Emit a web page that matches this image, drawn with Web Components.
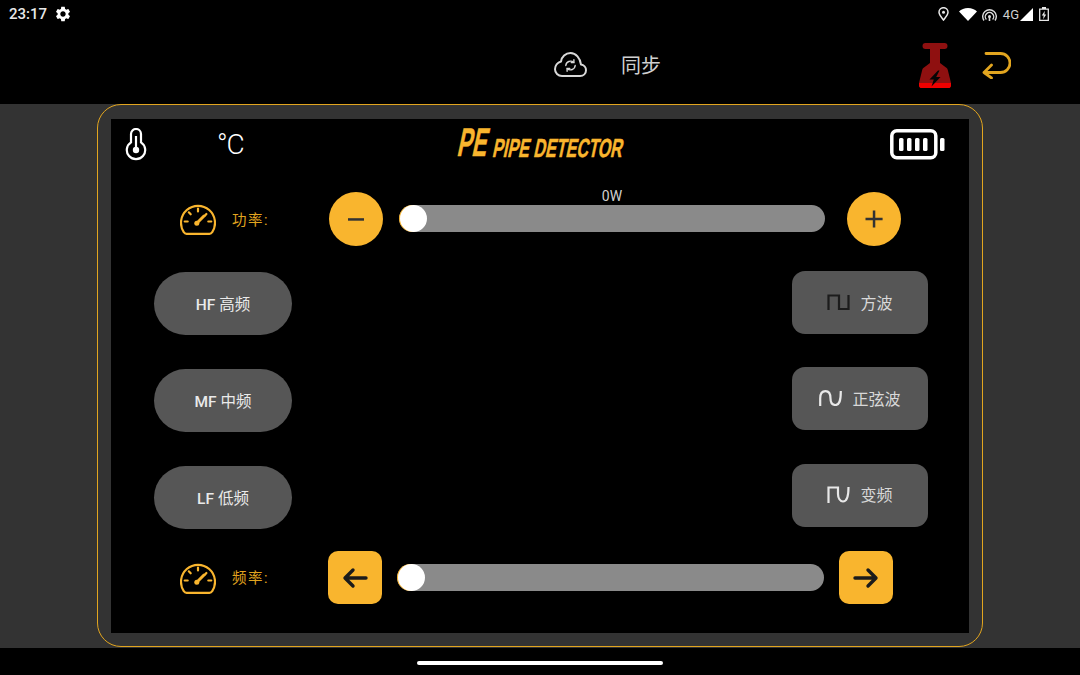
<!DOCTYPE html>
<html lang="zh">
<head>
<meta charset="utf-8">
<title>PE Pipe Detector</title>
<style>
  html, body { margin: 0; height: 100%; background: #000; }
  body { font-family: Roboto, "Noto Sans CJK SC", sans-serif; overflow: hidden; }
</style>
</head>
<body>
<app-screen></app-screen>

<script>
const ORANGE = '#f9b52e';

// [box width, box height, svg body, optional viewBox size]
const ICONS = {
  gear: [18, 18, `<path fill="#fff" d="M19.140 12.940c.04-.3.06-.61.06-.94 0-.32-.02-.64-.07-.94l2.030-1.580c.18-.14.23-.41.12-.61l-1.920-3.320c-.12-.22-.37-.29-.59-.22l-2.390.96c-.5-.38-1.030-.7-1.620-.94l-.36-2.540c-.04-.24-.24-.41-.48-.41h-3.840c-.24 0-.43.17-.47.41l-.36 2.540c-.59.24-1.130.57-1.620.94l-2.390-.96c-.22-.08-.47 0-.59.22L2.740 8.870c-.12.21-.08.47.12.61l2.030 1.580c-.05.3-.09.63-.09.94s.02.64.07.94l-2.030 1.580c-.18.14-.23.41-.12.61l1.920 3.320c.12.22.37.29.59.22l2.390-.96c.5.38 1.030.7 1.620.94l.36 2.540c.05.24.24.41.48.41h3.840c.24 0 .44-.17.47-.41l.36-2.540c.59-.24 1.130-.56 1.620-.94l2.390.96c.22.08.47 0 .59-.22l1.920-3.320c.12-.22.07-.47-.12-.61l-2.010-1.580zM12 15.600c-1.980 0-3.600-1.620-3.600-3.600s1.620-3.600 3.600-3.600 3.600 1.620 3.600 3.600-1.620 3.600-3.600 3.600z"/>`, 24],
  pin: [11, 14, `<path fill="none" stroke="#e8e8e8" stroke-width="1.500" d="M5.500 13C3 9.800 1 7.700 1 5.200a4.500 4.500 0 0 1 9 0C10 7.700 8 9.800 5.500 13z"/><circle cx="5.500" cy="5.200" r="1.500" fill="#e8e8e8"/>`],
  wifi: [18, 13, `<path fill="#fff" d="M9 13 0 3.500C2.200 1.300 5.400 0 9 0s6.800 1.300 9 3.500z"/>`],
  hotspot: [15, 14, `<g fill="none" stroke="#ddd" stroke-width="1.400"><path d="M2 13.500a6.800 6.800 0 1 1 11 0"/><path d="M4.400 12.500a4.200 4.200 0 1 1 6.200 0"/></g><circle cx="7.500" cy="9.500" r="1.500" fill="#ddd"/><path fill="#ddd" d="M6.700 10h1.600v4H6.700z"/>`],
  signal: [13, 13, `<path fill="#fff" d="M13 0v13H0z"/>`],
  charge: [10, 14, `<path fill="none" stroke="#e8e8e8" stroke-width="1.300" d="M.7 2.200h8.600v11.100H.7z"/><path fill="#e8e8e8" d="M3 0h4v2H3zM5.800 3.800 2.800 8.500h1.800l-.4 3.700 3-4.800H5.400z"/>`],
  cloud: [33, 25, `<g fill="none" stroke="#d8d8d8" stroke-width="2" stroke-linecap="round" stroke-linejoin="round"><path d="M8 24h18c3.500 0 6-2.500 6-5.700 0-3-2.200-5.300-5-5.700C26.300 6 21.800 1 16.500 1 11.500 1 7.600 5 7 9.500 3.500 10.500 1 13.800 1 17.300 1 21 4 24 8 24z"/></g><g fill="none" stroke="#d8d8d8" stroke-width="1.400" stroke-linecap="round"><path d="M11.800 13.500a4.800 4.800 0 0 1 7.900-3.200"/><path d="M21.200 13.500a4.800 4.800 0 0 1-7.900 3.200"/><path d="M19.900 7.800v2.800h-2.700M13.100 19.200v-2.800h2.700"/></g>`],
  plunger: [32, 45, `<path fill="#8f1010" d="M6.500 0h19a3 3 0 0 1 0 6H21v14l6 4.500c1 .6 1.500 1.300 1.800 2.500L32 40v2a3 3 0 0 1-3 3H3a3 3 0 0 1-3-3v-2l3.200-13c.3-1.200.8-1.900 1.800-2.500L11 20V6H6.500a3 3 0 0 1 0-6z"/><path fill="#f00000" d="M0 40h32v2.200a2.800 2.800 0 0 1-2.800 2.800H2.800A2.800 2.800 0 0 1 0 42.200z"/><path fill="#050505" d="M19 27.500 10.500 36.500h4.300L12.500 43.500l9-9.500h-4.300l3.300-6.500z"/>`],
  back: [29, 27, `<path fill="none" stroke="#e2a51f" stroke-width="2.800" stroke-linecap="round" stroke-linejoin="round" d="M4 1.500h14.500a9 9 0 0 1 0 19H2M9.500 13 2 20.500 9.500 26"/>`],
  thermo: [22, 33, `<path fill="none" stroke="#fff" stroke-width="2.200" d="M6 14.300V6a5 5 0 0 1 10 0v8.300a9.200 9.200 0 1 1-10 0z"/><circle cx="11" cy="22" r="3.200" fill="#fff"/><path stroke="#fff" stroke-width="2.200" d="M11 8v14"/>`],
  battery: [55, 31, `<rect x="1.800" y="1.800" width="44" height="27" rx="5" fill="none" stroke="#fff" stroke-width="3.500"/><g fill="#fff"><rect x="9" y="9" width="4.500" height="13" rx="1.500"/><rect x="17" y="9" width="4.500" height="13" rx="1.500"/><rect x="25" y="9" width="4.500" height="13" rx="1.500"/><rect x="33" y="9" width="4.500" height="13" rx="1.500"/><rect x="50" y="9" width="4.500" height="13" rx="1.500"/></g>`],
  gauge: [36, 32, `<g fill="none" stroke="${ORANGE}" stroke-width="2.200" stroke-linecap="round"><path d="M6.500 30.800h23c1.200 0 2-.5 2.600-1.500A17 17 0 1 0 3.900 29.300c.6 1 1.400 1.500 2.600 1.500z"/><path d="M18 5.500v3M8.800 9.300l1.900 2M4.700 18.500h3M28.300 18.500h3M26.400 11l-1.600 1.800"/><path stroke-width="3" d="m17 20 7-7"/></g><circle cx="16.800" cy="20.200" r="2.500" fill="${ORANGE}"/>`],
  minus: [18, 3, `<path fill="#333" d="M1 .2h16v2.500H1z"/>`],
  plus: [18, 18, `<path fill="#333" d="M7.800 .5h2.500v7.300h7.300v2.500h-7.300v7.300H7.800v-7.300H.5V7.800h7.300z"/>`],
  left: [26, 22, `<path fill="none" stroke="#1b1b1b" stroke-width="3.400" stroke-linecap="round" stroke-linejoin="round" d="M24 11H3.500M11 3l-8 8 8 8"/>`],
  right: [26, 22, `<path fill="none" stroke="#1b1b1b" stroke-width="3.400" stroke-linecap="round" stroke-linejoin="round" d="M2 11h20.500M15 3l8 8-8 8"/>`],
  square: [23, 16, `<path fill="none" stroke="#1c1c1c" stroke-width="2.200" d="M1.500 16V1.500H12v13.500h9.500V1"/>`],
  sine: [23, 16, `<path fill="none" stroke="#e8e8e8" stroke-width="2.200" d="M1.200 16V8.500C1.200 4 3 1.200 6.500 1.200S11.500 4 11.500 8.500 13 15 16.500 15 21.800 12 21.800 1"/>`],
  sweep: [23, 17, `<path fill="none" stroke="#e8e8e8" stroke-width="2.200" d="M1.500 17V1.500H11V8c0 4 2 7.500 5 7.500S21.500 12 21.500 1"/>`],
};

class UiIcon extends HTMLElement {
  connectedCallback() {
    const [w, h, body, vb] = ICONS[this.getAttribute('name')];
    this.attachShadow({ mode: 'open' }).innerHTML = `
      <style>:host { display: block; flex: none; width: ${w}px; height: ${h}px; } svg { display: block; }</style>
      <svg width="${w}" height="${h}" viewBox="0 0 ${vb || w} ${vb || h}">${body}</svg>`;
  }
}

class StatusBar extends HTMLElement {
  connectedCallback() {
    this.attachShadow({ mode: 'open' }).innerHTML = `
      <style>
        :host { display: flex; align-items: center; height: 28px; padding: 0 31px 0 9px; background: #000; color: #e8e8e8; }
        .time { font-size: 15px; font-weight: 500; margin-right: 7px; }
        .grow { flex: 1; }
        .net { font-size: 13px; color: #d0d0d0; margin: 0 1px 0 6px; }
        .pin { margin-right: 10px; }
        .wifi { margin-right: 5px; }
        .charge { margin-left: 6px; }
      </style>
      <span class="time">23:17</span><ui-icon name="gear"></ui-icon>
      <span class="grow"></span>
      <ui-icon class="pin" name="pin"></ui-icon>
      <ui-icon class="wifi" name="wifi"></ui-icon>
      <ui-icon name="hotspot"></ui-icon>
      <span class="net">4G</span>
      <ui-icon name="signal"></ui-icon>
      <ui-icon class="charge" name="charge"></ui-icon>`;
  }
}

class AppBar extends HTMLElement {
  connectedCallback() {
    this.attachShadow({ mode: 'open' }).innerHTML = `
      <style>
        :host { display: flex; align-items: center; height: 76px; padding: 0 69px 0 554px; background: #000; color: #d0d0d0; }
        .cloud { margin-top: -3px; }
        .sync { font-size: 20px; margin: -3px 0 0 34px; flex: 1; }
        .back { margin-left: 31px; margin-top: -2px; }
        .plunger { margin-top: -1px; }
      </style>
      <ui-icon class="cloud" name="cloud"></ui-icon>
      <span class="sync">同步</span>
      <ui-icon class="plunger" name="plunger"></ui-icon>
      <ui-icon class="back" name="back"></ui-icon>`;
  }
}

class PeLogo extends HTMLElement {
  connectedCallback() {
    this.attachShadow({ mode: 'open' }).innerHTML = `
      <style>
        :host { display: flex; align-items: flex-end; width: 167px; height: 29px; color: ${ORANGE}; font-family: "Liberation Sans", sans-serif; font-weight: 700; white-space: nowrap; -webkit-text-stroke: .5px ${ORANGE}; }
        span { display: inline-block; line-height: 1; transform-origin: 0 100%; }
        .pe { width: 36px; font-size: 40px; transform: skewX(-12deg) scaleX(.55); }
        .name { font-size: 26px; margin-bottom: 1px; transform: skewX(-12deg) scaleX(.62); }
      </style>
      <span class="pe">PE</span><span class="name">PIPE DETECTOR</span>`;
  }
}

class RangeTrack extends HTMLElement {
  connectedCallback() {
    const value = this.getAttribute('value');
    this.attachShadow({ mode: 'open' }).innerHTML = `
      <style>
        :host { display: block; position: relative; flex: none; height: 27px; border-radius: 14px; background: #8a8a8a; }
        .fill { width: 16px; height: 100%; border-radius: 14px 0 0 14px; background: ${ORANGE}; }
        .thumb { position: absolute; left: 1px; top: 0; width: 27px; height: 27px; border-radius: 50%; background: #fff; }
        .value { position: absolute; left: 0; right: 0; top: -18px; text-align: center; font-size: 14px; line-height: 18px; color: #d0d0d0; }
      </style>
      <div class="fill"></div><div class="thumb"></div>
      ${value ? `<div class="value">${value}</div>` : ''}`;
  }
}

class ControlRow extends HTMLElement {
  connectedCallback() {
    const round = this.hasAttribute('round');
    const shape = round ? '50%' : '10px';
    const [a, b] = round ? ['minus', 'plus'] : ['left', 'right'];
    const value = this.getAttribute('value');
    const gapA = round ? 16 : 15;
    const gapB = round ? 22 : 15;
    const width = round ? 426 : 427;
    this.attachShadow({ mode: 'open' }).innerHTML = `
      <style>
        :host { display: flex; align-items: center; padding-left: 69px; height: ${round ? 54 : 53}px; }
        .label { display: flex; align-items: center; gap: 16px; width: ${round ? 149 : 148}px; flex: none; font-size: 14.500px; letter-spacing: 1.500px; color: #e2a51f; }
        .label span { margin-top: -2px; }
        button { all: unset; display: flex; align-items: center; justify-content: center; flex: none; width: 54px; height: ${round ? 54 : 53}px; border-radius: ${shape}; background: ${ORANGE}; }
        range-track { width: ${width}px; margin: ${round ? '-1px' : '0'} ${gapB}px 0 ${gapA}px; }
      </style>
      <div class="label"><ui-icon name="gauge"></ui-icon><span><slot></slot></span></div>
      <button type="button"><ui-icon name="${a}"></ui-icon></button>
      <range-track ${value ? `value="${value}"` : ''}></range-track>
      <button type="button"><ui-icon name="${b}"></ui-icon></button>`;
  }
}

class ModeButton extends HTMLElement {
  connectedCallback() {
    const wave = this.getAttribute('wave');
    const band = this.getAttribute('band');
    this.attachShadow({ mode: 'open' }).innerHTML = `
      <style>
        :host { display: flex; align-items: center; justify-content: center; gap: 10px; box-sizing: border-box; height: 63px; padding-bottom: 2px; background: #565656; color: #eaeaea; font-size: 15.500px; }
        :host([wave]) { width: 136px; border-radius: 13px; font-size: 16px; color: #d8d8d8; }
        :host(:not([wave])) { width: 138px; border-radius: 32px; }
        b { font-weight: 500; }
      </style>
      ${wave ? `<ui-icon name="${wave}"></ui-icon>` : ''}<span>${band ? `<b>${band}</b> ` : ''}<slot></slot></span>`;
  }
}

class DetectorPanel extends HTMLElement {
  connectedCallback() {
    this.attachShadow({ mode: 'open' }).innerHTML = `
      <style>
        :host { display: block; box-sizing: border-box; width: 886px; height: 543px; margin: 0 auto; padding: 14px 13px 13px; border: 1px solid #e2a51f; border-radius: 24px; background: #333; }
        .inner { height: 514px; background: #000; box-sizing: border-box; }
        header { display: flex; align-items: center; height: 50px; padding: 0 24px 0 14px; color: #fff; }
        .deg { font-size: 28px; font-weight: 300; letter-spacing: -1px; margin-left: 70px; width: 27px; }
        pe-logo { margin-left: 211px; margin-top: 6px; }
        .grow { flex: 1; }
        .modes { display: flex; justify-content: space-between; padding: 25px 41px 22px 43px; }
        .col { display: flex; flex-direction: column; gap: 33.300px; }
        .col.left { gap: 34px; padding-top: 1px; }
        control-row[round] { margin-top: 23px; }
      </style>
      <div class="inner">
        <header>
          <ui-icon name="thermo"></ui-icon>
          <span class="deg">°C</span>
          <pe-logo></pe-logo>
          <span class="grow"></span>
          <ui-icon name="battery"></ui-icon>
        </header>
        <control-row round value="0W">功率:</control-row>
        <div class="modes">
          <div class="col left">
            <mode-button band="HF">高频</mode-button>
            <mode-button band="MF">中频</mode-button>
            <mode-button band="LF">低频</mode-button>
          </div>
          <div class="col">
            <mode-button wave="square">方波</mode-button>
            <mode-button wave="sine">正弦波</mode-button>
            <mode-button wave="sweep">变频</mode-button>
          </div>
        </div>
        <control-row>频率:</control-row>
      </div>`;
  }
}

class NavBar extends HTMLElement {
  connectedCallback() {
    this.attachShadow({ mode: 'open' }).innerHTML = `
      <style>
        :host { display: flex; align-items: center; justify-content: center; height: 27px; background: #000; }
        div { width: 246px; height: 4px; margin-top: 3px; border-radius: 2px; background: #fff; }
      </style>
      <div></div>`;
  }
}

class AppScreen extends HTMLElement {
  connectedCallback() {
    this.attachShadow({ mode: 'open' }).innerHTML = `
      <style>
        :host { display: flex; flex-direction: column; width: 1080px; height: 675px; }
        main { height: 544px; background: #333; }
      </style>
      <status-bar></status-bar>
      <app-bar></app-bar>
      <main><detector-panel></detector-panel></main>
      <nav-bar></nav-bar>`;
  }
}

customElements.define('ui-icon', UiIcon);
customElements.define('status-bar', StatusBar);
customElements.define('app-bar', AppBar);
customElements.define('pe-logo', PeLogo);
customElements.define('range-track', RangeTrack);
customElements.define('control-row', ControlRow);
customElements.define('mode-button', ModeButton);
customElements.define('detector-panel', DetectorPanel);
customElements.define('nav-bar', NavBar);
customElements.define('app-screen', AppScreen);
</script>
</body>
</html>
